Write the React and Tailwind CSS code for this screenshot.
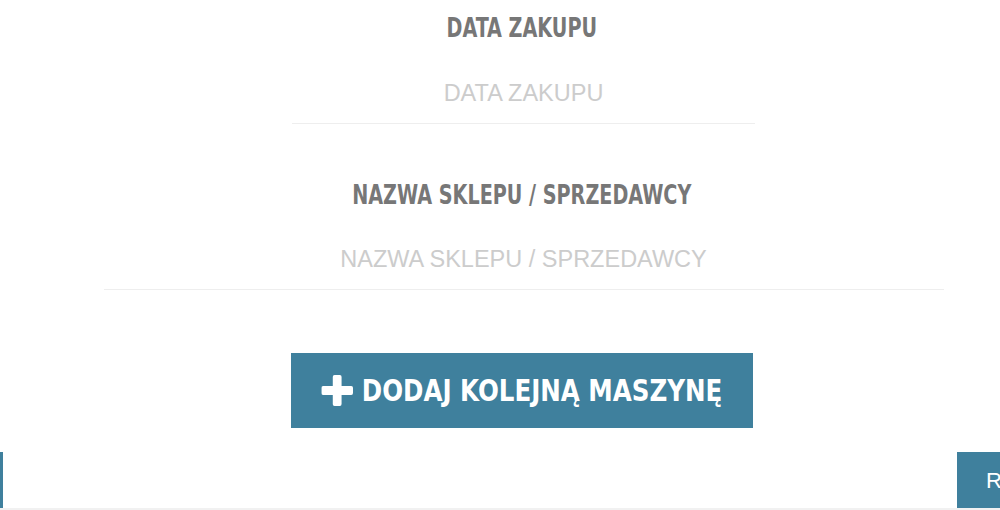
export default function App() {
  const heading = "inline-block scale-x-[0.82] font-['DejaVu_Sans_Condensed','DejaVu_Sans',sans-serif] font-bold text-[26px] leading-[31px] text-[#777777] text-center whitespace-nowrap";
  const field = "w-full h-[61px] border-b border-[#eeeeee] bg-white text-center font-['Liberation_Sans',Arial,sans-serif] text-[23.5px] text-[#555] placeholder:text-[#cccccc] outline-none";

  return (
    <div className="w-[1000px] h-[510px] bg-white overflow-hidden flex flex-col">
      <div className="flex flex-col items-center pl-[47px]">
        {/* Data zakupu */}
        <h2 className={heading + " mt-[13px] mr-[3px]"}>DATA ZAKUPU</h2>
        <div className="w-[463px] mt-[19px]">
          <input type="text" placeholder="DATA ZAKUPU" className={field} />
        </div>

        {/* Sklep */}
        <h2 className={heading + " mt-[56px] mr-[3px]"}>NAZWA SKLEPU / SPRZEDAWCY</h2>
        <div className="w-[840px] mt-[18px]">
          <input type="text" placeholder="NAZWA SKLEPU / SPRZEDAWCY" className={field} />
        </div>

        <button className="mt-[63px] mr-[3px] w-[462px] h-[75px] bg-[#3f809d] flex items-center justify-center text-white">
          <span className="flex items-center gap-[10px] scale-x-[0.88] whitespace-nowrap">
            <svg width="36" height="31" viewBox="0 0 36 31" fill="#ffffff">
              <rect x="13" y="0" width="10" height="31" rx="2" />
              <rect x="0" y="11" width="36" height="9" rx="2" />
            </svg>
            <span className="font-['DejaVu_Sans_Condensed','DejaVu_Sans',sans-serif] font-bold text-[31px] leading-none">
              DODAJ KOLEJNĄ MASZYNĘ
            </span>
          </span>
        </button>
      </div>

      {/* bottom bar */}
      <div className="mt-[24px] h-[56px] flex justify-between">
        <div className="w-[3px] bg-[#3f809d]"></div>
        <div className="w-[43px] bg-[#3f809d] whitespace-nowrap pl-[29px] flex items-center font-['Liberation_Sans',Arial,sans-serif] text-[22px] text-white">
          R
        </div>
      </div>
      <div className="h-[2px] bg-[#f1f1f1]"></div>
    </div>
  );
}
